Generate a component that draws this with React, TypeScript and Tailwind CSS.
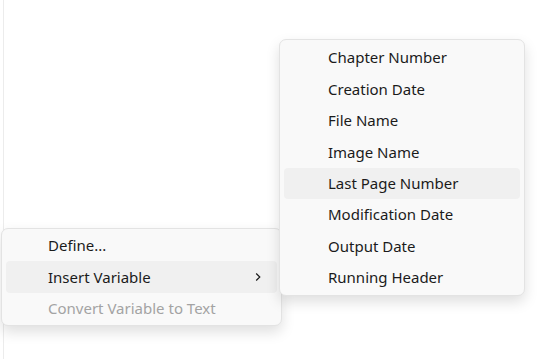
import React from "react";

const font = { fontFamily: '"Segoe UI", "Noto Sans", "Open Sans", sans-serif' };

function Item({ label, active, disabled, chevron, main }: { label: string; active?: boolean; disabled?: boolean; chevron?: boolean; main?: boolean }) {
  return (
    <div
      className={`mx-[4px] flex h-[31.4px] items-center rounded-[4px] ${main ? "pl-[42px]" : "pl-[44px]"} pr-[13px] text-[15px] ${
        active ? "bg-[#f0f0f0]" : ""
      } ${disabled ? "text-[#a3a3a3]" : "text-[#1b1b1b]"}`}
    >
      <span className="flex-1 whitespace-nowrap">{label}</span>
      {chevron && (
        <svg width="10" height="10" viewBox="0 0 10 10" className="mr-[1px]">
          <path d="M3.2 1.5 L6.8 5 L3.2 8.5" fill="none" stroke="#1b1b1b" strokeWidth="1.2" />
        </svg>
      )}
    </div>
  );
}

export default function App() {
  const sub = [
    "Chapter Number",
    "Creation Date",
    "File Name",
    "Image Name",
    "Last Page Number",
    "Modification Date",
    "Output Date",
    "Running Header",
  ];
  return (
    <div className="relative h-[359px] w-[560px] overflow-hidden bg-white" style={font}>
      <div className="absolute left-[3px] top-0 h-full w-px bg-[#ececec]" />
      <div className="absolute left-[1px] top-[228px] w-[281px] rounded-[7px] border border-[#e3e3e3] bg-[#f9f9f9] py-[1px] shadow-[0_6px_14px_rgba(0,0,0,0.13)]">
        <Item main label="Define..." />
        <Item main label="Insert Variable" active chevron />
        <Item main label="Convert Variable to Text" disabled />
      </div>
      <div className="absolute left-[279px] top-[39px] w-[246px] rounded-[7px] border border-[#e3e3e3] bg-[#f9f9f9] pb-[2px] pt-[2px] shadow-[0_6px_14px_rgba(0,0,0,0.13)]">
        {sub.map((s) => (
          <Item key={s} label={s} active={s === "Last Page Number"} />
        ))}
      </div>
    </div>
  );
}
